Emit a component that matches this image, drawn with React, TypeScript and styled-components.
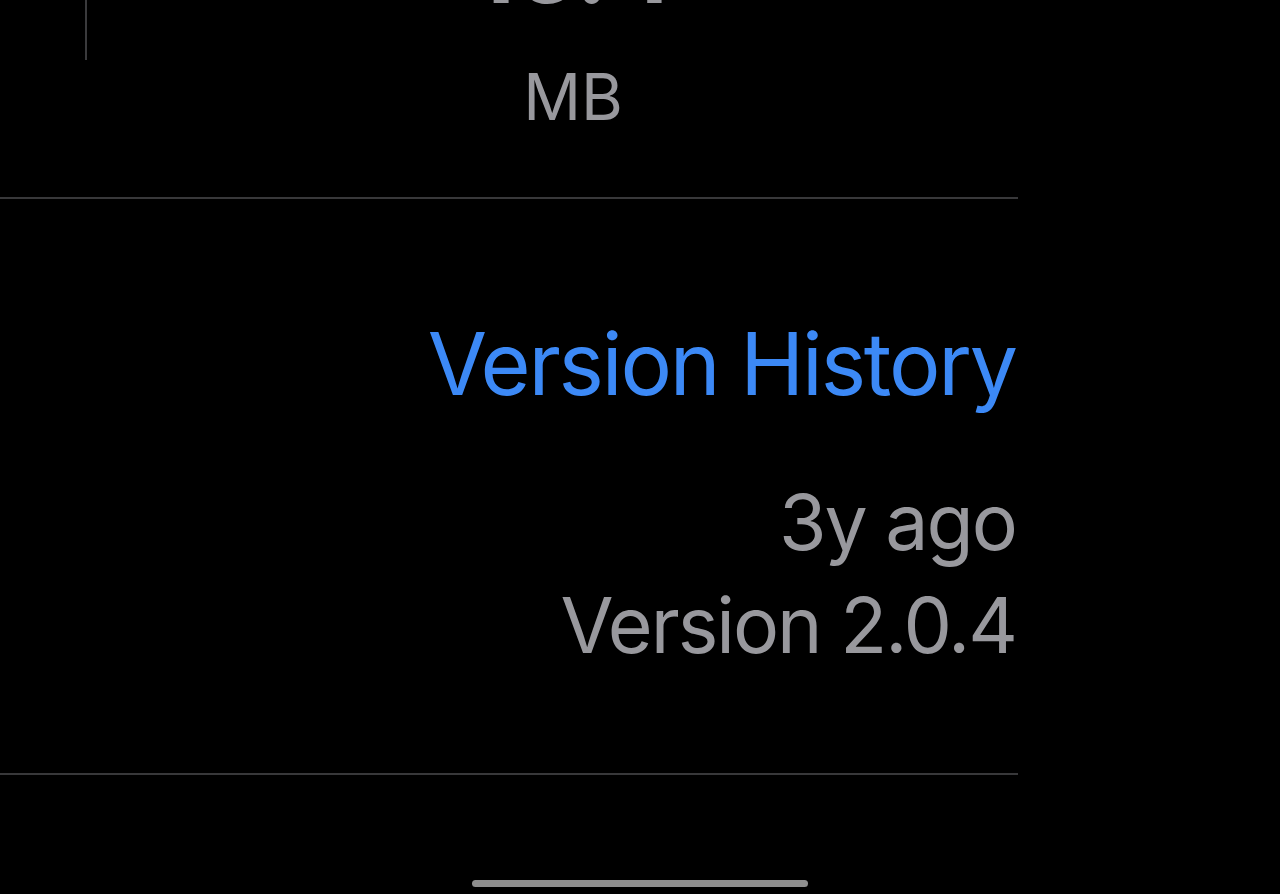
import React from "react";
import styled, { createGlobalStyle } from "styled-components";

const GlobalStyle = createGlobalStyle`
  html, body {
    margin: 0;
    padding: 0;
    background: #000;
  }
  body {
    font-family: Inter, "Noto Sans", "Liberation Sans", sans-serif;
    -webkit-font-smoothing: antialiased;
  }
  #root {
    width: 1280px;
    height: 894px;
    overflow: hidden;
  }
`;

const Screen = styled.div`
  width: 1280px;
  height: 894px;
  background: #000;
  display: flex;
  flex-direction: column;
  overflow: hidden;
`;

const Content = styled.div`
  width: 1018px;
  display: flex;
  flex-direction: column;
`;

const InfoRow = styled.div`
  height: 197px;
  display: flex;
  align-items: flex-start;
`;

const CellDivider = styled.div`
  margin-left: 85px;
  width: 2px;
  height: 60px;
  background: #3a3a3c;
  flex: none;
`;

const InfoCell = styled.div`
  width: 972px;
  flex: none;
  display: flex;
  flex-direction: column;
  align-items: center;
`;

const InfoValue = styled.div`
  margin-top: -83px;
  font-size: 100px;
  line-height: 1;
  font-weight: 700;
  color: #98989d;
  letter-spacing: -1px;
`;

const InfoCaption = styled.div`
  margin-top: 48px;
  font-size: 64px;
  line-height: 1;
  color: #98989d;
`;

const Separator = styled.div`
  height: 2px;
  background: #38383a;
`;

const VersionSection = styled.div`
  height: 574px;
  box-sizing: border-box;
  padding-top: 122px;
  padding-right: 2px;
  display: flex;
  flex-direction: column;
  align-items: flex-end;
`;

const HistoryLink = styled.a`
  font-size: 86px;
  line-height: 1;
  color: #3c89f6;
  text-decoration: none;
  letter-spacing: -2.2px;
  margin-bottom: 64px;
`;

const MetaLine = styled.div`
  font-size: 77px;
  line-height: 103px;
  color: #98989d;
  letter-spacing: -2px;
  text-align: right;
`;

const HomeArea = styled.div`
  flex: 1;
  display: flex;
  justify-content: center;
  align-items: flex-end;
  padding-bottom: 7px;
`;

const HomeIndicator = styled.div`
  width: 336px;
  height: 7px;
  border-radius: 4px;
  background: #8e8e8e;
`;

export default function App() {
  return (
    <>
      <GlobalStyle />
      <Screen>
        <Content>
          <InfoRow>
            <CellDivider />
            <InfoCell>
              <InfoValue>16.4</InfoValue>
              <InfoCaption>MB</InfoCaption>
            </InfoCell>
          </InfoRow>
          <Separator />
          <VersionSection>
            <HistoryLink href="#">Version History</HistoryLink>
            <MetaLine>3y ago</MetaLine>
            <MetaLine>Version 2.0.4</MetaLine>
          </VersionSection>
          <Separator />
        </Content>
        <HomeArea>
          <HomeIndicator />
        </HomeArea>
      </Screen>
    </>
  );
}
